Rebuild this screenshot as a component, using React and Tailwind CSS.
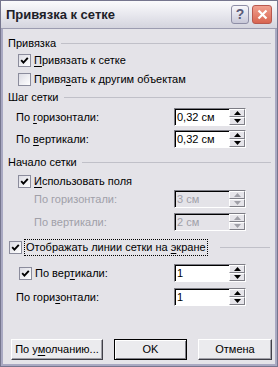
import React from "react";

function Check({ checked }) {
  return (
    <span className="w-[13px] h-[13px] shrink-0 border border-[#8b8c9c] bg-gradient-to-br from-[#dcdce4] to-white flex items-center justify-center">
      {checked && (
        <svg width="9" height="9" viewBox="0 0 9 9">
          <path d="M1.2 4.2 L3.4 6.6 L7.8 1.8" fill="none" stroke="#000" strokeWidth="1.9" />
        </svg>
      )}
    </span>
  );
}

function U({ children }) {
  return <span className="underline underline-offset-2">{children}</span>;
}

function SpinBtn({ up, disabled }) {
  return (
    <div className="h-[8px] w-[16px] bg-[#e6e5ea] border-t border-l border-white border-b border-r border-b-[#808088] border-r-[#808088] flex items-center justify-center">
      <svg width="7" height="4" viewBox="0 0 7 4">
        <path
          d={up ? "M0 4 L3.5 0 L7 4 Z" : "M0 0 L3.5 4 L7 0 Z"}
          fill={disabled ? "#a0a0a8" : "#000"}
        />
      </svg>
    </div>
  );
}

function Spin({ value, disabled }) {
  return (
    <div
      className={`w-[72px] h-[18px] flex items-center border border-t-[#7c7c84] border-l-[#7c7c84] border-r-white border-b-white shadow-[inset_1px_1px_0_#000] ${
        disabled ? "bg-[#e4e3e8] text-[#a0a0a8]" : "bg-white text-black"
      }`}
    >
      <span className="flex-1 pl-[2px] pt-[1px] leading-none">{value}</span>
      <div className="flex flex-col pr-[0px]">
        <SpinBtn up disabled={disabled} />
        <SpinBtn disabled={disabled} />
      </div>
    </div>
  );
}

function Header({ title, h, line = "flex-1" }) {
  return (
    <div className={`flex items-center gap-[5px] pl-[5px] pr-[4px] ${h}`}>
      <span>{title}</span>
      <div className={`h-px bg-[#c0c0c8] ${line}`} />
    </div>
  );
}

function Button({ children, def, w }) {
  return (
    <div
      className={`${w} h-[21px] flex items-center justify-center bg-[#ebebee] border ${
        def
          ? "border-black shadow-[inset_1px_1px_0_#fff,inset_-1px_-1px_0_#808088]"
          : "border-t-white border-l-white border-r-[#404048] border-b-[#404048] shadow-[inset_-1px_-1px_0_#a0a0a8]"
      }`}
    >
      {children}
    </div>
  );
}

export default function App() {
  return (
    <div
      className="w-[278px] h-[367px] bg-[#a9a9c2] border border-[#76768e] p-[2px] pt-0 flex flex-col text-[11px] text-black"
      style={{ fontFamily: '"Liberation Sans", Arial, sans-serif' }}
    >
      <div className="h-[28px] shrink-0 -mx-[2px] px-[5px] bg-gradient-to-b from-[#fbfbfc] via-[#e8e8ee] to-[#d4d4de] flex items-center justify-between border-b border-[#9c9cb0]">
        <span className="text-[13px] font-bold text-[#202028] pt-[1px]">Привязка к сетке</span>
        <div className="flex gap-[3px] pr-[0px]">
          <div className="w-[18px] h-[19px] rounded-[3px] border border-[#8e8ea6] bg-gradient-to-b from-[#f8f8fc] to-[#c8c8d8] flex items-center justify-center text-[14px] font-bold text-[#5a5a78]">
            ?
          </div>
          <div className="w-[20px] h-[19px] rounded-[3px] border border-[#b8584e] bg-gradient-to-b from-[#f0a090] to-[#d86450] flex items-center justify-center">
            <svg width="11" height="11" viewBox="0 0 11 11">
              <path d="M1.5 1.5 L9.5 9.5 M9.5 1.5 L1.5 9.5" stroke="#fff" strokeWidth="2.2" />
            </svg>
          </div>
        </div>
      </div>

      <div className="flex-1 bg-[#e4e3e8] flex flex-col pt-[6px] pb-[4px]">
        <Header title="Привязка" h="h-[16px]" />
        <div className="h-[18px] flex items-center gap-[3px] pl-[15px]">
          <Check checked />
          <span>
            <U>П</U>ривязать к сетке
          </span>
        </div>
        <div className="h-[20px] flex items-center gap-[3px] pl-[15px]">
          <Check />
          <span>
            Привя<U>з</U>ать к другим объектам
          </span>
        </div>

        <Header title="Шаг сетки" h="h-[16px]" />
        <div className="h-[24px] flex items-center justify-between pl-[13px] pr-[29px]">
          <span>
            По <U>г</U>оризонтали:
          </span>
          <Spin value="0,32 см" />
        </div>
        <div className="h-[20px] flex items-center justify-between pl-[13px] pr-[29px]">
          <span>
            По <U>в</U>ертикали:
          </span>
          <Spin value="0,32 см" />
        </div>

        <Header title="Начало сетки" h="h-[26px]" />
        <div className="h-[12px] flex items-center gap-[3px] pl-[15px]">
          <Check checked />
          <span>
            <U>И</U>спользовать поля
          </span>
        </div>
        <div className="h-[24px] flex items-center justify-between pl-[31px] pr-[29px] text-[#a0a0a8]">
          <span>По горизонтали:</span>
          <Spin value="3 см" disabled />
        </div>
        <div className="h-[22px] flex items-center justify-between pl-[31px] pr-[29px] text-[#a0a0a8]">
          <span>По вертикали:</span>
          <Spin value="2 см" disabled />
        </div>

        <div className="h-[28px] flex items-center pl-[6px] pr-[5px]">
          <Check checked />
          <span className="ml-[2px] px-[1px] py-[1px] border border-dotted border-black leading-[13px]">
            Отображать линии сетки на <U>э</U>кране
          </span>
          <div className="flex-1 h-px bg-[#c0c0c8] ml-[12px]" />
        </div>
        <div className="h-[24px] flex items-center justify-between pl-[16px] pr-[29px]">
          <div className="flex items-center gap-[3px]">
            <Check checked />
            <span>
              По вер<U>т</U>икали:
            </span>
          </div>
          <Spin value="1" />
        </div>
        <div className="h-[24px] flex items-center justify-between pl-[13px] pr-[29px]">
          <span>
            По гори<U>з</U>онтали:
          </span>
          <Spin value="1" />
        </div>

        <div className="flex-1" />
        <div className="flex items-center pl-[8px] gap-[11px]">
          <Button w="w-[92px]">
            <span>
              По у<U>м</U>олчанию...
            </span>
          </Button>
          <Button w="w-[73px]" def>
            OK
          </Button>
          <Button w="w-[74px]">Отмена</Button>
        </div>
      </div>
    </div>
  );
}
